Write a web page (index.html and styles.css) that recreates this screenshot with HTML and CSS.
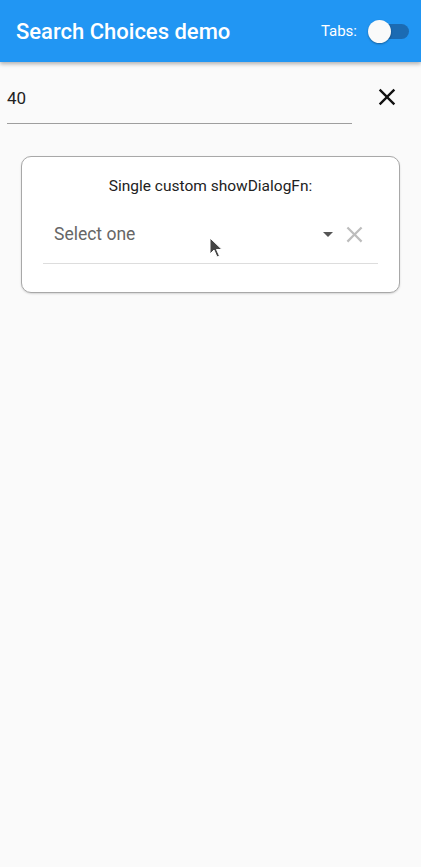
FILE: index.html
```html
<!DOCTYPE html>
<html lang="en">
<head>
  <meta charset="UTF-8" />
  <title>Search Choices demo</title>
  <link rel="stylesheet" href="styles.css">
</head>
<body>

  <header class="appbar">
    <h1 class="appbar-title">Search Choices demo</h1>
    <div class="appbar-tabs">
      <span>Tabs:</span>
      <span class="switch"><span class="switch-thumb"></span></span>
    </div>
  </header>

  <div class="filter">
    <div class="filter-field">40</div>
    <button class="filter-clear" type="button">
      <svg viewBox="0 0 24 24" width="28" height="28"><path d="M19 6.41 17.59 5 12 10.59 6.41 5 5 6.41 10.59 12 5 17.59 6.41 19 12 13.41 17.59 19 19 17.59 13.41 12z" fill="#111"/></svg>
    </button>
  </div>

  <div class="card">
    <div class="card-title">Single custom showDialogFn:</div>
    <div class="select">
      <span class="select-hint">Select one</span>
      <svg class="select-arrow" viewBox="0 0 24 24" width="24" height="24"><path d="M7 10l5 5 5-5z" fill="#555"/></svg>
      <svg class="select-clear" viewBox="0 0 24 24" width="27" height="27"><path d="M19 6.41 17.59 5 12 10.59 6.41 5 5 6.41 10.59 12 5 17.59 6.41 19 12 13.41 17.59 19 19 17.59 13.41 12z" fill="#bdbdbd"/></svg>
    </div>
  </div>

  <svg class="cursor" viewBox="0 0 14 22" width="14" height="22"><path d="M1 1v16l4-4 3 7 2.5-1-3-6.5h5.5z" fill="#444" stroke="#fff" stroke-width="1"/></svg>

</body>
</html>
```

FILE: styles.css
```css
body { margin: 0; background: #fafafa; font-family: Roboto, "Liberation Sans", sans-serif; min-height: 867px; }

.appbar { height: 62px; background: #2196f3; display: flex; align-items: center; justify-content: space-between; padding: 0 12px 0 16px; box-shadow: 0 2px 4px rgba(0,0,0,0.3); }
.appbar-title { margin: 0; color: #fff; font-size: 22px; font-weight: 500; }
.appbar-tabs { display: flex; align-items: center; gap: 11px; color: #fff; font-size: 15px; }
.switch { width: 41px; height: 15px; border-radius: 8px; background: #1b6bb3; position: relative; }
.switch-thumb { position: absolute; left: 0; top: -4px; width: 23px; height: 23px; border-radius: 50%; background: #fafafa; box-shadow: 0 1px 2px rgba(0,0,0,0.35); }

.filter { display: flex; align-items: center; padding: 20px 20px 0 7px; }
.filter-field { flex: 1; height: 42px; font-size: 17px; color: #222; border-bottom: 1px solid #9e9e9e; box-sizing: border-box; padding-top: 6px; }
.filter-clear { border: 0; background: none; padding: 0; margin-left: 21px; margin-bottom: 12px; width: 28px; height: 28px; }

.card { margin: 32px 21px 0 21px; height: 137px; box-sizing: border-box; border: 1px solid #a8a8a8; border-radius: 10px; background: #fff; box-shadow: 0 1px 2px rgba(0,0,0,0.15); padding: 19px 21px 0 21px; }
.card-title { text-align: center; font-size: 15.5px; line-height: 20px; color: #222; }
.select { display: flex; align-items: center; height: 61px; margin-top: 7px; border-bottom: 1px solid #ddd; padding: 2px 0 0 11px; box-sizing: border-box; }
.select-hint { flex: 1; font-size: 17.5px; color: #666; }
.select-arrow { margin-right: 1px; }
.select-clear { margin-right: 10px; }

.cursor { position: absolute; left: 209px; top: 237px; }
```
